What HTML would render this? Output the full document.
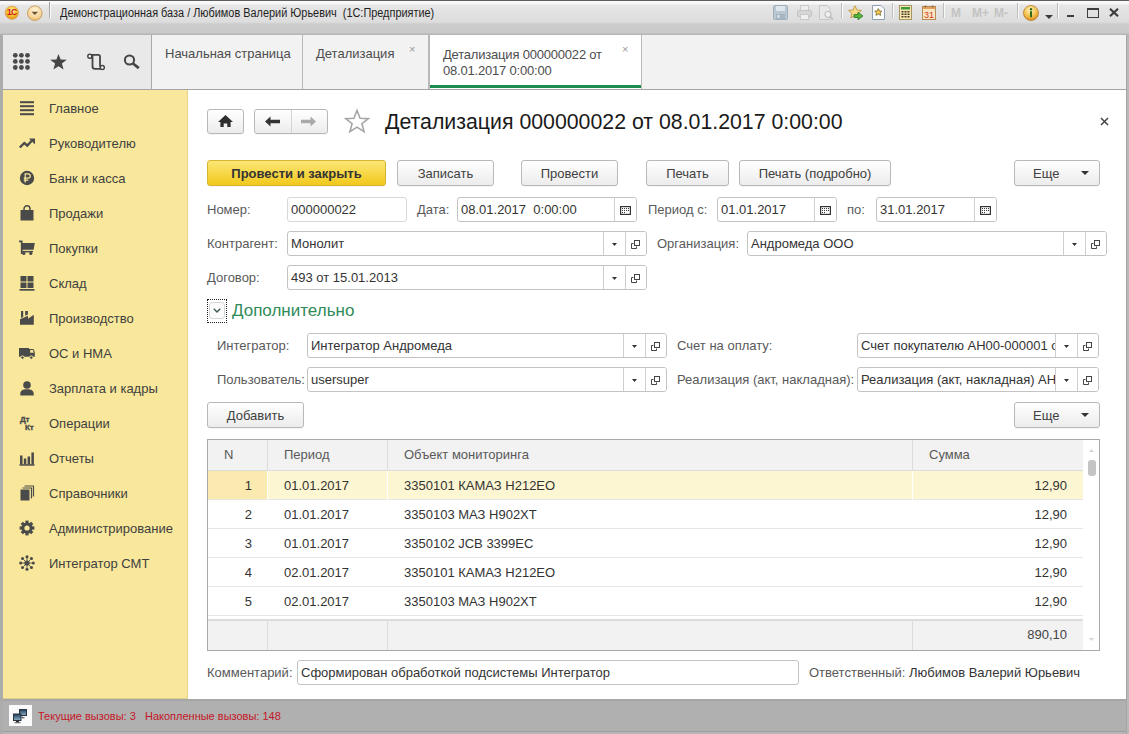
<!DOCTYPE html>
<html><head><meta charset="utf-8">
<style>
*{box-sizing:border-box;margin:0;padding:0}
html,body{width:1129px;height:734px;overflow:hidden;background:#b6b6b6}
body{font-family:"Liberation Sans",sans-serif;font-size:13px;color:#333;position:relative}
.a{position:absolute}
svg{position:absolute;overflow:visible}
#titlebar{left:0;top:0;width:1129px;height:35px;background:linear-gradient(#fafafa 0,#f6f6f6 3px,#e6e6e6 4px,#dddddd 21px,#cdcdcd 23px,#c9c9c9 32px,#b6b6b6 33px,#b6b6b6 34px);border-top:1px solid #5e5e5e}
#ttl{left:60px;top:5px;font-size:12px;line-height:16px;color:#1e1e1e;white-space:nowrap;transform:scaleX(0.909);transform-origin:0 0}
#iconpanel{left:3px;top:35px;width:149px;height:55px;background:#e9e9e9;border-right:1px solid #a9a9a9;border-bottom:1px solid #a4a4a4}
#tabs{left:152px;top:35px;width:974px;height:55px;background:#f2f2f2;border-bottom:1px solid #a4a4a4}
.tab{position:absolute;top:35px;height:54px;border-right:1px solid #b9b9b9;color:#4d4d4d;font-size:13px;line-height:16px;padding:10px 0 0 13px;white-space:nowrap}
#rstrip{left:1126px;top:35px;width:3px;height:699px;background:linear-gradient(90deg,#a6a6a6 0,#a6a6a6 1px,#b9b9b9 1px)}
#lstrip{left:0;top:35px;width:3px;height:699px;background:#acacac}
#sidebar{left:3px;top:90px;width:185px;height:609px;background:#f9e89b;border-right:1px solid #e6d58a;border-bottom:1px solid #ddd08c}
.si{position:absolute;left:49px;font-size:13px;line-height:16px;color:#404040;white-space:nowrap}
#main{left:188px;top:90px;width:938px;height:609px;background:#fff}
#status{left:3px;top:699px;width:1123px;height:33px;background:#b0b0b0;border-top:2px solid #a6a6a6;border-bottom:1px solid #9f9f9f}
.btn{position:absolute;height:26px;border:1px solid #b8b8b8;border-radius:3px;background:linear-gradient(#ffffff,#ececec);color:#404040;text-align:center;line-height:25px;font-size:13px;white-space:nowrap;box-shadow:0 1px 0 rgba(0,0,0,0.04)}
.lbl{position:absolute;color:#595959;font-size:13px;white-space:nowrap}
.inp{position:absolute;height:25px;border:1px solid #c3c3c3;border-radius:3px;background:#fff;color:#333;font-size:13px;line-height:23px;padding-left:3px;white-space:nowrap;overflow:hidden}
.dd{position:absolute;top:0;bottom:0;border-left:1px solid #dcdcdc;width:22px;background:#fff}
.t{position:absolute;color:#333;white-space:nowrap}
</style></head><body>

<div id="titlebar" class="a"></div>
<svg style="left:4px;top:5px" width="16" height="16" viewBox="0.5 0.7 16 16">
<defs><radialGradient id="g1c" cx="50%" cy="35%" r="60%"><stop offset="0" stop-color="#fff6b0"/><stop offset="0.6" stop-color="#f7c531"/><stop offset="1" stop-color="#e89a1a"/></radialGradient></defs>
<circle cx="8.4" cy="8.4" r="6.6" fill="url(#g1c)" stroke="#d89a55" stroke-width="0.8"/>
<text x="8.2" y="11.2" font-family="Liberation Sans" font-weight="bold" font-size="8.5" fill="#c8141a" text-anchor="middle" letter-spacing="-0.8">1C</text></svg>
<svg style="left:26px;top:5px" width="18" height="18" viewBox="0 0 18 18">
<defs><radialGradient id="gdd" cx="50%" cy="30%" r="70%"><stop offset="0" stop-color="#fff4d8"/><stop offset="0.7" stop-color="#f6d49a"/><stop offset="1" stop-color="#e9b865"/></radialGradient></defs>
<circle cx="8.8" cy="8.2" r="7.3" fill="url(#gdd)" stroke="#c79a5c" stroke-width="0.9"/>
<path d="M5.5 6.8 H12.1 L8.8 10 Z" fill="#6b5235"/></svg>
<div class="a" style="left:49px;top:2px;width:1px;height:16px;background:linear-gradient(#9c9c9c,#b4b4b4);box-shadow:1px 0 0 #fafafa"></div>
<div id="ttl" class="a">Демонстрационная база / Любимов Валерий Юрьевич&nbsp; (1С:Предприятие)</div>
<svg style="left:773px;top:5px" width="15" height="15" viewBox="0 0 15 15">
<rect x="0.5" y="0.5" width="14" height="14" rx="1" fill="#b9c7d2" stroke="#9fb0bd"/>
<rect x="3" y="1" width="9" height="5" fill="#dfe7ee"/><rect x="3" y="9" width="9" height="5" fill="#a5b5c2"/><rect x="4.5" y="10" width="2" height="3" fill="#dfe7ee"/></svg>
<svg style="left:797px;top:5px" width="15" height="15" viewBox="0 0 15 15">
<rect x="3.5" y="0.5" width="8" height="5" fill="#ececec" stroke="#c9c9c9"/>
<rect x="0.5" y="5.5" width="14" height="6" rx="1.5" fill="#d6d6d6" stroke="#c2c2c2"/>
<rect x="3.5" y="9.5" width="8" height="5" fill="#efefef" stroke="#c9c9c9"/></svg>
<svg style="left:819px;top:5px" width="15" height="15" viewBox="0 0 15 15">
<path d="M0.5 0.5 H8 L11 3.5 V14.5 H0.5 Z" fill="#e8e8e8" stroke="#c6c6c6"/>
<circle cx="9" cy="9.5" r="3" fill="#f1f1f1" stroke="#bcbcbc" stroke-width="1.2"/><path d="M11 11.5 L14 14.5" stroke="#c0c0c0" stroke-width="1.8"/></svg>
<div class="a" style="left:841px;top:3px;width:1px;height:15px;background:#bdbdbd;box-shadow:1px 0 0 #fafafa"></div>
<div class="a" style="left:892px;top:3px;width:1px;height:15px;background:#bdbdbd;box-shadow:1px 0 0 #fafafa"></div>
<div class="a" style="left:943px;top:3px;width:1px;height:15px;background:#bdbdbd;box-shadow:1px 0 0 #fafafa"></div>
<div class="a" style="left:1017px;top:3px;width:1px;height:15px;background:#bdbdbd;box-shadow:1px 0 0 #fafafa"></div>
<div class="a" style="left:1057px;top:3px;width:1px;height:15px;background:#bdbdbd;box-shadow:1px 0 0 #fafafa"></div>
<svg style="left:848px;top:5px" width="16" height="16" viewBox="0 0 16 16">
<path d="M7 0.8 L9 5 L13.5 5.4 L10.1 8.3 L11.2 12.8 L7 10.4 L2.8 12.8 L3.9 8.3 L0.5 5.4 L5 5 Z" fill="#f7d98a" stroke="#b89137" stroke-width="0.8"/>
<path d="M6 9.5 H10 V7.2 L15 11 L10 14.8 V12.5 H6 Z" fill="#58b43a" stroke="#2f7a20" stroke-width="0.8"/></svg>
<svg style="left:872px;top:5px" width="13" height="15" viewBox="0 0 13 15">
<path d="M0.5 0.5 H9 L12.5 4 V14.5 H0.5 Z" fill="#fdfdfd" stroke="#8ea0b4"/>
<path d="M6.3 3.5 L7.5 6 L10 6.2 L8.1 7.9 L8.7 10.4 L6.3 9 L3.9 10.4 L4.5 7.9 L2.6 6.2 L5.1 6 Z" fill="#f3c950" stroke="#6a5a2a" stroke-width="0.7"/></svg>
<svg style="left:899px;top:5px" width="13" height="15" viewBox="0 0 13 15">
<rect x="0.5" y="0.5" width="12" height="14" fill="#f6e7b6" stroke="#a89560"/>
<rect x="2" y="2" width="9" height="2.5" fill="#3f9a3a"/>
<g fill="#4a3a1a"><rect x="2.5" y="6" width="2" height="1.5"/><rect x="5.5" y="6" width="2" height="1.5"/><rect x="8.5" y="6" width="2" height="1.5"/>
<rect x="2.5" y="8.5" width="2" height="1.5"/><rect x="5.5" y="8.5" width="2" height="1.5"/><rect x="8.5" y="8.5" width="2" height="1.5"/>
<rect x="2.5" y="11" width="2" height="1.5"/><rect x="5.5" y="11" width="2" height="1.5"/><rect x="8.5" y="11" width="2" height="1.5"/></g></svg>
<svg style="left:922px;top:5px" width="14" height="15" viewBox="0 0 14 15">
<rect x="0.5" y="1.5" width="13" height="13" fill="#fbe6c4" stroke="#b58c58"/>
<rect x="1" y="2" width="12" height="2" fill="#e5a15a"/>
<circle cx="3.5" cy="1.5" r="1" fill="#8a6a3a"/><circle cx="10.5" cy="1.5" r="1" fill="#8a6a3a"/>
<text x="7" y="13" font-family="Liberation Sans" font-size="9" fill="#d43a1a" text-anchor="middle">31</text></svg>
<div class="a" style="left:951px;top:6px;font-size:12px;line-height:14px;font-weight:bold;color:#c3c3c3;white-space:nowrap">M</div>
<div class="a" style="left:972px;top:6px;font-size:12px;line-height:14px;font-weight:bold;color:#c3c3c3;white-space:nowrap">M+</div>
<div class="a" style="left:994px;top:6px;font-size:12px;line-height:14px;font-weight:bold;color:#c3c3c3;white-space:nowrap">M-</div>
<svg style="left:1023px;top:5px" width="16" height="16" viewBox="0 0 16 16">
<defs><radialGradient id="gi" cx="45%" cy="30%" r="70%"><stop offset="0" stop-color="#fff3c0"/><stop offset="0.6" stop-color="#f4c14e"/><stop offset="1" stop-color="#d98f1e"/></radialGradient></defs>
<circle cx="8" cy="8" r="7.5" fill="url(#gi)" stroke="#b67a2a" stroke-width="0.8"/>
<circle cx="8" cy="4.2" r="1.2" fill="#2f6a1a"/><rect x="7" y="6.2" width="2" height="6" fill="#2f6a1a"/></svg>
<svg style="left:1045px;top:15px" width="8" height="4" viewBox="0 0 8 4"><path d="M0 0 H8 L4 4 Z" fill="#3a3a3a"/></svg>
<div class="a" style="left:1067px;top:15px;width:7px;height:2px;background:#3c3c3c"></div>
<div class="a" style="left:1087px;top:8px;width:12px;height:10px;border:1.5px solid #3c3c3c;border-top-width:2px"></div>
<svg style="left:1109px;top:8px" width="10" height="9" viewBox="0 0 10 9"><path d="M1 0.8 L9 8.2 M9 0.8 L1 8.2" stroke="#3a3a3a" stroke-width="2.1"/></svg>
<div id="lstrip" class="a"></div>
<div id="iconpanel" class="a"></div>
<svg style="left:0;top:0" width="40" height="80" viewBox="0 0 40 80" fill="#4a4a4a"><circle cx="15.3" cy="55.3" r="2.4"/><circle cx="15.3" cy="61.4" r="2.4"/><circle cx="15.3" cy="67.5" r="2.4"/><circle cx="21.4" cy="55.3" r="2.4"/><circle cx="21.4" cy="61.4" r="2.4"/><circle cx="21.4" cy="67.5" r="2.4"/><circle cx="27.5" cy="55.3" r="2.4"/><circle cx="27.5" cy="61.4" r="2.4"/><circle cx="27.5" cy="67.5" r="2.4"/></svg>
<svg style="left:49px;top:53px" width="19" height="18" viewBox="0 0 19 18"><path d="M9.5 1 L11.6 6.6 L17.8 6.8 L12.9 10.6 L14.6 16.6 L9.5 13.2 L4.4 16.6 L6.1 10.6 L1.2 6.8 L7.4 6.6 Z" fill="#454545"/></svg>
<svg style="left:86px;top:53px" width="20" height="18" viewBox="0 0 20 18" fill="none" stroke="#454545" stroke-width="1.8">
<path d="M3.5 4.5 C3.5 2.5 5 1.8 6 1.8 H12.5 C13.5 1.8 14 2.6 14 3.6 V12 C14 13.5 15 14.2 16 14.2 M3.5 4.5 H6.5 M6.5 2.5 V13.5 C6.5 15 7.5 15.8 9 15.8 H16.2"/>
<circle cx="3.8" cy="3.3" r="2" fill="#fff" stroke-width="1.5"/><circle cx="16.3" cy="14.5" r="2" fill="#fff" stroke-width="1.5"/></svg>
<svg style="left:123px;top:54px" width="18" height="16" viewBox="0 0 18 16"><circle cx="6.5" cy="6" r="4.6" fill="none" stroke="#454545" stroke-width="2"/><path d="M10 9.5 L15.8 14.2" stroke="#454545" stroke-width="2.8"/></svg>
<div id="tabs" class="a"></div>
<div class="tab" style="left:152px;width:151px;padding-left:13px;padding-top:11px">Начальная страница</div>
<div class="tab" style="left:303px;width:126px;padding-left:13px;padding-top:11px">Детализация</div>
<div class="a" style="left:409px;top:44px;font-size:11px;line-height:10px;color:#9a9a9a">×</div>
<div class="tab" style="left:429px;width:213px;background:#fff;border-left:1px solid #b9b9b9;padding-left:13px;padding-top:12px;height:54px;letter-spacing:-0.2px">Детализация 000000022 от<br>08.01.2017 0:00:00</div>
<div class="a" style="left:622px;top:44px;font-size:11px;line-height:10px;color:#9a9a9a">×</div>
<div class="a" style="left:430px;top:85px;width:211px;height:3px;background:#1d8a4e"></div>
<div id="rstrip" class="a"></div>
<div id="sidebar" class="a"></div>
<div class="si" style="top:101px">Главное</div>
<svg style="left:19px;top:100px" width="16" height="16" viewBox="0 0 16 16"><g fill="#4a4a4a"><rect x="1" y="1.2" width="14" height="2"/><rect x="1" y="5.2" width="14" height="2"/><rect x="1" y="9.2" width="14" height="2"/><rect x="1" y="13.2" width="14" height="2"/></g></svg>
<div class="si" style="top:136px">Руководителю</div>
<svg style="left:19px;top:135px" width="16" height="16" viewBox="0 0 16 16"><path d="M0.8 12.5 L5.3 8 L8.3 10.5 L13 5.5" fill="none" stroke="#4a4a4a" stroke-width="2.4"/><path d="M10 3.5 H16 V9.5 Z" fill="#4a4a4a"/></svg>
<div class="si" style="top:171px">Банк и касса</div>
<svg style="left:19px;top:170px" width="16" height="16" viewBox="0 0 16 16"><circle cx="8" cy="8" r="7.2" fill="#4a4a4a"/><path d="M6.2 12.5 V3.8 H9 C10.6 3.8 11.3 4.7 11.3 6 C11.3 7.3 10.6 8.2 9 8.2 H4.8 M4.8 10.2 H9.3" fill="none" stroke="#fbe89b" stroke-width="1.2"/></svg>
<div class="si" style="top:206px">Продажи</div>
<svg style="left:19px;top:205px" width="16" height="16" viewBox="0 0 16 16"><path d="M1.5 5 H14.5 V15.5 H1.5 Z" fill="#4a4a4a"/><path d="M5 7 V4 C5 2 6.2 0.8 8 0.8 C9.8 0.8 11 2 11 4 V7" fill="none" stroke="#4a4a4a" stroke-width="1.5"/></svg>
<div class="si" style="top:241px">Покупки</div>
<svg style="left:19px;top:240px" width="16" height="16" viewBox="0 0 16 16"><path d="M0 1.4 H2.7 V14" fill="none" stroke="#4a4a4a" stroke-width="1.7"/><path d="M2.7 3.1 H15.8 L14.6 9.7 H2.7 Z" fill="#4a4a4a"/><rect x="3" y="10.9" width="11" height="1.5" fill="#4a4a4a"/><circle cx="4.8" cy="13.4" r="1.6" fill="#4a4a4a"/><circle cx="11.8" cy="13.4" r="1.6" fill="#4a4a4a"/></svg>
<div class="si" style="top:276px">Склад</div>
<svg style="left:19px;top:275px" width="16" height="16" viewBox="0 0 16 16"><g fill="#4a4a4a"><rect x="1.5" y="1" width="6" height="5.5"/><rect x="8.5" y="1" width="6" height="5.5"/><rect x="1.5" y="7.5" width="6" height="5.5"/><rect x="8.5" y="7.5" width="6" height="5.5"/><rect x="0.5" y="14" width="15" height="1.7"/></g></svg>
<div class="si" style="top:311px">Производство</div>
<svg style="left:19px;top:310px" width="16" height="16" viewBox="0 0 16 16"><path d="M1 14.8 V9.3 L9 5.7 V8.7 L14.8 4.8 V14.8 Z M2 1 H4.2 V6.9 L2 7.9 Z M6.2 1 H8.9 V4.6 L6.2 5.8 Z" fill="#4a4a4a"/></svg>
<div class="si" style="top:346px">ОС и НМА</div>
<svg style="left:19px;top:345px" width="16" height="16" viewBox="0 0 16 16"><path d="M0 3.1 H10.1 V11.8 H0 Z M10.1 4.1 H14.3 L15.8 7 V11.8 H10.1 Z" fill="#4a4a4a"/><path d="M11.2 5.1 H13.8 L14.9 7.8 H11.2 Z" fill="#f9e89b"/><circle cx="3.5" cy="12.6" r="1.7" fill="#4a4a4a" stroke="#f9e89b" stroke-width="1"/><circle cx="12.3" cy="12.6" r="1.7" fill="#4a4a4a" stroke="#f9e89b" stroke-width="1"/></svg>
<div class="si" style="top:381px">Зарплата и кадры</div>
<svg style="left:19px;top:380px" width="16" height="16" viewBox="0 0 16 16"><circle cx="8" cy="5" r="3.8" fill="#4a4a4a"/><path d="M1.3 15.5 V13.5 C1.3 10.8 3.8 9.3 8 9.3 C12.2 9.3 14.7 10.8 14.7 13.5 V15.5 Z" fill="#4a4a4a"/></svg>
<div class="si" style="top:416px">Операции</div>
<svg style="left:19px;top:415px" width="16" height="16" viewBox="0 0 16 16"><g font-family="Liberation Sans" font-weight="bold" font-size="8" fill="#4a4a4a" stroke="#4a4a4a" stroke-width="0.35" letter-spacing="-0.2"><text x="1" y="6.6">Дт</text><text x="6" y="14.5">Кт</text></g></svg>
<div class="si" style="top:451px">Отчеты</div>
<svg style="left:19px;top:450px" width="16" height="16" viewBox="0 0 16 16"><g fill="#4a4a4a"><rect x="1" y="5.5" width="2.5" height="9"/><rect x="4.8" y="8.5" width="2.5" height="6"/><rect x="8.6" y="6.5" width="2.5" height="8"/><rect x="12.4" y="2.5" width="2.5" height="12"/><rect x="0.5" y="14.2" width="15" height="1.5"/></g></svg>
<div class="si" style="top:486px">Справочники</div>
<svg style="left:19px;top:485px" width="16" height="16" viewBox="0 0 16 16"><rect x="1.5" y="4.5" width="9" height="11" fill="#4a4a4a"/><path d="M3.5 3 H12.5 V13.5 M5.5 1 H14.5 V11.5" fill="none" stroke="#4a4a4a" stroke-width="1.2"/></svg>
<div class="si" style="top:521px">Администрирование</div>
<svg style="left:19px;top:520px" width="16" height="16" viewBox="0 0 16 16"><g fill="#4a4a4a"><circle cx="8" cy="8" r="5.6"/><rect x="6.4" y="0.6" width="3.2" height="3.4" transform="rotate(0 8 8)"/><rect x="6.4" y="0.6" width="3.2" height="3.4" transform="rotate(45 8 8)"/><rect x="6.4" y="0.6" width="3.2" height="3.4" transform="rotate(90 8 8)"/><rect x="6.4" y="0.6" width="3.2" height="3.4" transform="rotate(135 8 8)"/><rect x="6.4" y="0.6" width="3.2" height="3.4" transform="rotate(180 8 8)"/><rect x="6.4" y="0.6" width="3.2" height="3.4" transform="rotate(225 8 8)"/><rect x="6.4" y="0.6" width="3.2" height="3.4" transform="rotate(270 8 8)"/><rect x="6.4" y="0.6" width="3.2" height="3.4" transform="rotate(315 8 8)"/></g><circle cx="8" cy="8" r="2.6" fill="#f9e89b"/></svg>
<div class="si" style="top:556px">Интегратор СМТ</div>
<svg style="left:19px;top:555px" width="16" height="16" viewBox="0 0 16 16"><g fill="#4a4a4a"><circle cx="8" cy="8" r="2.6"/><circle cx="8.00" cy="1.70" r="1.55"/><circle cx="12.45" cy="3.55" r="1.55"/><circle cx="14.30" cy="8.00" r="1.55"/><circle cx="12.45" cy="12.45" r="1.55"/><circle cx="8.00" cy="14.30" r="1.55"/><circle cx="3.55" cy="12.45" r="1.55"/><circle cx="1.70" cy="8.00" r="1.55"/><circle cx="3.55" cy="3.55" r="1.55"/></g><path d="M8 3.2 V12.8 M3.2 8 H12.8 M4.6 4.6 L11.4 11.4 M11.4 4.6 L4.6 11.4" stroke="#4a4a4a" stroke-width="0.9"/></svg>
<div id="main" class="a"></div>
<div id="status" class="a"></div>
<div class="btn" style="left:207px;top:109px;width:37px;height:25px"></div>
<svg style="left:218px;top:114px" width="15" height="14" viewBox="0 0 15 14"><path d="M7.5 1 L15 8 H12.6 V13 H9.3 V9.6 H5.7 V13 H2.4 V8 H0 Z" fill="#2e2e2e"/></svg>
<div class="btn" style="left:254px;top:109px;width:74px;height:25px"></div>
<div class="a" style="left:291px;top:110px;width:1px;height:23px;background:#d4d4d4"></div>
<svg style="left:264px;top:115px" width="18" height="13" viewBox="0 0 18 13"><path d="M1 6.5 L6.5 1.5 V4.8 H16 V8.2 H6.5 V11.5 Z" fill="#333"/></svg>
<svg style="left:299px;top:115px" width="18" height="13" viewBox="0 0 18 13"><path d="M17 6.5 L11.5 1.5 V4.8 H2 V8.2 H11.5 V11.5 Z" fill="#a9a9a9"/></svg>
<svg style="left:344px;top:109px" width="26" height="25" viewBox="0 0 26 25"><path d="M13 1.5 L16.1 9.2 L24.3 9.6 L17.9 14.7 L20.1 22.6 L13 18.1 L5.9 22.6 L8.1 14.7 L1.7 9.6 L9.9 9.2 Z" fill="none" stroke="#a6a6a6" stroke-width="1.6"/></svg>
<div class="t" style="left:385px;top:110px;font-size:21.3px;line-height:25px;color:#1a1a1a">Детализация 000000022 от 08.01.2017 0:00:00</div>
<svg style="left:1100px;top:117px" width="9" height="9" viewBox="0 0 9 9"><path d="M1 1 L8 8 M8 1 L1 8" stroke="#444" stroke-width="1.5"/></svg>
<div class="btn" style="left:207px;top:160px;width:179px;height:26px;background:linear-gradient(#fce776,#f2c81c);border-color:#d9b431;color:#333;font-weight:bold">Провести и закрыть</div>
<div class="btn" style="left:397px;top:160px;width:97px;height:26px">Записать</div>
<div class="btn" style="left:521px;top:160px;width:97px;height:26px">Провести</div>
<div class="btn" style="left:646px;top:160px;width:83px;height:26px">Печать</div>
<div class="btn" style="left:739px;top:160px;width:152px;height:26px">Печать (подробно)</div>
<div class="btn" style="left:1014px;top:160px;width:86px;height:26px;text-align:left;padding-left:18px">Еще</div>
<svg style="left:1081px;top:171px" width="8" height="4" viewBox="0 0 8 4"><path d="M0 0 H8 L4 4 Z" fill="#333"/></svg>
<div class="lbl" style="left:207px;top:197px;line-height:25px;color:#595959">Номер:</div>
<div class="inp" style="left:287px;top:197px;width:120px;height:25px;border-color:#d9d9d9">000000022</div>
<div class="lbl" style="left:417px;top:197px;line-height:25px;color:#595959">Дата:</div>
<div class="inp" style="left:457px;top:197px;width:180px;height:25px;">08.01.2017&nbsp; 0:00:00</div>
<div class="a" style="left:614px;top:198px;width:22px;height:23px;background:#fff;border-left:1px solid #cfcfcf;border-radius:0 2px 2px 0"></div>
<svg style="left:620px;top:206px" width="11" height="9" viewBox="0 0 11 9"><rect x="0.6" y="0.6" width="9.8" height="7.8" fill="#fff" stroke="#333" stroke-width="1.2"/><g fill="#333"><rect x="2" y="2" width="1" height="1"/><rect x="4" y="2" width="1" height="1"/><rect x="6" y="2" width="1" height="1"/><rect x="8" y="2" width="1" height="1"/><rect x="2" y="4" width="1" height="1"/><rect x="4" y="4" width="1" height="1"/><rect x="6" y="4" width="1" height="1"/><rect x="8" y="4" width="1" height="1"/><rect x="2" y="6" width="1" height="1"/><rect x="4" y="6" width="1" height="1"/></g></svg>
<div class="lbl" style="left:648px;top:197px;line-height:25px;color:#595959">Период с:</div>
<div class="inp" style="left:717px;top:197px;width:120px;height:25px;">01.01.2017</div>
<div class="a" style="left:814px;top:198px;width:22px;height:23px;background:#fff;border-left:1px solid #cfcfcf;border-radius:0 2px 2px 0"></div>
<svg style="left:820px;top:206px" width="11" height="9" viewBox="0 0 11 9"><rect x="0.6" y="0.6" width="9.8" height="7.8" fill="#fff" stroke="#333" stroke-width="1.2"/><g fill="#333"><rect x="2" y="2" width="1" height="1"/><rect x="4" y="2" width="1" height="1"/><rect x="6" y="2" width="1" height="1"/><rect x="8" y="2" width="1" height="1"/><rect x="2" y="4" width="1" height="1"/><rect x="4" y="4" width="1" height="1"/><rect x="6" y="4" width="1" height="1"/><rect x="8" y="4" width="1" height="1"/><rect x="2" y="6" width="1" height="1"/><rect x="4" y="6" width="1" height="1"/></g></svg>
<div class="lbl" style="left:847px;top:197px;line-height:25px;color:#595959">по:</div>
<div class="inp" style="left:876px;top:197px;width:121px;height:25px;">31.01.2017</div>
<div class="a" style="left:974px;top:198px;width:22px;height:23px;background:#fff;border-left:1px solid #cfcfcf;border-radius:0 2px 2px 0"></div>
<svg style="left:980px;top:206px" width="11" height="9" viewBox="0 0 11 9"><rect x="0.6" y="0.6" width="9.8" height="7.8" fill="#fff" stroke="#333" stroke-width="1.2"/><g fill="#333"><rect x="2" y="2" width="1" height="1"/><rect x="4" y="2" width="1" height="1"/><rect x="6" y="2" width="1" height="1"/><rect x="8" y="2" width="1" height="1"/><rect x="2" y="4" width="1" height="1"/><rect x="4" y="4" width="1" height="1"/><rect x="6" y="4" width="1" height="1"/><rect x="8" y="4" width="1" height="1"/><rect x="2" y="6" width="1" height="1"/><rect x="4" y="6" width="1" height="1"/></g></svg>
<div class="lbl" style="left:207px;top:231px;line-height:25px;color:#595959">Контрагент:</div>
<div class="inp" style="left:287px;top:231px;width:360px;height:25px;">Монолит</div>
<div class="a" style="left:603px;top:232px;width:43px;height:23px;background:#fff;border-left:1px solid #cfcfcf;border-radius:0 2px 2px 0"></div>
<div class="a" style="left:625px;top:232px;width:1px;height:23px;background:#cfcfcf"></div>
<svg style="left:612px;top:243px" width="5" height="3" viewBox="0 0 5 3"><path d="M0 0 H5 L2.5 3 Z" fill="#333"/></svg>
<svg style="left:630px;top:239px" width="11" height="11" viewBox="0 0 11 11" fill="none" stroke="#444" stroke-width="1"><rect x="4.5" y="1.5" width="5" height="5"/><path d="M3.5 4.5 H1.5 V9.5 H6.5 V7.5"/></svg>
<div class="lbl" style="left:657px;top:231px;line-height:25px;color:#595959">Организация:</div>
<div class="inp" style="left:747px;top:231px;width:360px;height:25px;">Андромеда ООО</div>
<div class="a" style="left:1063px;top:232px;width:43px;height:23px;background:#fff;border-left:1px solid #cfcfcf;border-radius:0 2px 2px 0"></div>
<div class="a" style="left:1085px;top:232px;width:1px;height:23px;background:#cfcfcf"></div>
<svg style="left:1072px;top:243px" width="5" height="3" viewBox="0 0 5 3"><path d="M0 0 H5 L2.5 3 Z" fill="#333"/></svg>
<svg style="left:1090px;top:239px" width="11" height="11" viewBox="0 0 11 11" fill="none" stroke="#444" stroke-width="1"><rect x="4.5" y="1.5" width="5" height="5"/><path d="M3.5 4.5 H1.5 V9.5 H6.5 V7.5"/></svg>
<div class="lbl" style="left:207px;top:265px;line-height:25px;color:#595959">Договор:</div>
<div class="inp" style="left:287px;top:265px;width:360px;height:25px;">493 от 15.01.2013</div>
<div class="a" style="left:603px;top:266px;width:43px;height:23px;background:#fff;border-left:1px solid #cfcfcf;border-radius:0 2px 2px 0"></div>
<div class="a" style="left:625px;top:266px;width:1px;height:23px;background:#cfcfcf"></div>
<svg style="left:612px;top:277px" width="5" height="3" viewBox="0 0 5 3"><path d="M0 0 H5 L2.5 3 Z" fill="#333"/></svg>
<svg style="left:630px;top:273px" width="11" height="11" viewBox="0 0 11 11" fill="none" stroke="#444" stroke-width="1"><rect x="4.5" y="1.5" width="5" height="5"/><path d="M3.5 4.5 H1.5 V9.5 H6.5 V7.5"/></svg>
<div class="a" style="left:207px;top:299px;width:20px;height:24px;border:1px dotted #222"></div>
<div class="a" style="left:209px;top:302px;width:16px;height:17px;border:1px solid #d6d6d6;border-radius:3px;background:#fcfcfc"></div>
<svg style="left:213px;top:308px" width="8" height="5" viewBox="0 0 8 5"><path d="M0.8 0.8 L4 4 L7.2 0.8" fill="none" stroke="#3d5a50" stroke-width="1.4"/></svg>
<div class="t" style="left:232px;top:299px;font-size:17px;line-height:23px;color:#2f8b58">Дополнительно</div>
<div class="lbl" style="left:217px;top:333px;line-height:25px;color:#595959">Интегратор:</div>
<div class="inp" style="left:307px;top:333px;width:360px;height:25px;">Интегратор Андромеда</div>
<div class="a" style="left:623px;top:334px;width:43px;height:23px;background:#fff;border-left:1px solid #cfcfcf;border-radius:0 2px 2px 0"></div>
<div class="a" style="left:645px;top:334px;width:1px;height:23px;background:#cfcfcf"></div>
<svg style="left:632px;top:345px" width="5" height="3" viewBox="0 0 5 3"><path d="M0 0 H5 L2.5 3 Z" fill="#333"/></svg>
<svg style="left:650px;top:341px" width="11" height="11" viewBox="0 0 11 11" fill="none" stroke="#444" stroke-width="1"><rect x="4.5" y="1.5" width="5" height="5"/><path d="M3.5 4.5 H1.5 V9.5 H6.5 V7.5"/></svg>
<div class="lbl" style="left:677px;top:333px;line-height:25px;color:#595959">Счет на оплату:</div>
<div class="inp" style="left:857px;top:333px;width:242px;height:25px;">Счет покупателю АН00-000001 от 01.01.2017</div>
<div class="a" style="left:1055px;top:334px;width:43px;height:23px;background:#fff;border-left:1px solid #cfcfcf;border-radius:0 2px 2px 0"></div>
<div class="a" style="left:1077px;top:334px;width:1px;height:23px;background:#cfcfcf"></div>
<svg style="left:1064px;top:345px" width="5" height="3" viewBox="0 0 5 3"><path d="M0 0 H5 L2.5 3 Z" fill="#333"/></svg>
<svg style="left:1082px;top:341px" width="11" height="11" viewBox="0 0 11 11" fill="none" stroke="#444" stroke-width="1"><rect x="4.5" y="1.5" width="5" height="5"/><path d="M3.5 4.5 H1.5 V9.5 H6.5 V7.5"/></svg>
<div class="lbl" style="left:217px;top:367px;line-height:25px;color:#595959">Пользователь:</div>
<div class="inp" style="left:307px;top:367px;width:360px;height:25px;">usersuper</div>
<div class="a" style="left:623px;top:368px;width:43px;height:23px;background:#fff;border-left:1px solid #cfcfcf;border-radius:0 2px 2px 0"></div>
<div class="a" style="left:645px;top:368px;width:1px;height:23px;background:#cfcfcf"></div>
<svg style="left:632px;top:379px" width="5" height="3" viewBox="0 0 5 3"><path d="M0 0 H5 L2.5 3 Z" fill="#333"/></svg>
<svg style="left:650px;top:375px" width="11" height="11" viewBox="0 0 11 11" fill="none" stroke="#444" stroke-width="1"><rect x="4.5" y="1.5" width="5" height="5"/><path d="M3.5 4.5 H1.5 V9.5 H6.5 V7.5"/></svg>
<div class="lbl" style="left:677px;top:367px;line-height:25px;color:#595959">Реализация (акт, накладная):</div>
<div class="inp" style="left:857px;top:367px;width:242px;height:25px;">Реализация (акт, накладная) АН00-000001</div>
<div class="a" style="left:1055px;top:368px;width:43px;height:23px;background:#fff;border-left:1px solid #cfcfcf;border-radius:0 2px 2px 0"></div>
<div class="a" style="left:1077px;top:368px;width:1px;height:23px;background:#cfcfcf"></div>
<svg style="left:1064px;top:379px" width="5" height="3" viewBox="0 0 5 3"><path d="M0 0 H5 L2.5 3 Z" fill="#333"/></svg>
<svg style="left:1082px;top:375px" width="11" height="11" viewBox="0 0 11 11" fill="none" stroke="#444" stroke-width="1"><rect x="4.5" y="1.5" width="5" height="5"/><path d="M3.5 4.5 H1.5 V9.5 H6.5 V7.5"/></svg>
<div class="btn" style="left:207px;top:402px;width:97px;height:26px">Добавить</div>
<div class="btn" style="left:1014px;top:402px;width:86px;height:26px;text-align:left;padding-left:18px">Еще</div>
<svg style="left:1081px;top:413px" width="8" height="4" viewBox="0 0 8 4"><path d="M0 0 H8 L4 4 Z" fill="#333"/></svg>
<div class="a" style="left:207px;top:439px;width:893px;height:212px;border:1px solid #a9a9a9;background:#fff"></div>
<div class="a" style="left:208px;top:440px;width:875px;height:31px;background:#f2f2f2;border-bottom:1px solid #dcdcdc"></div>
<div class="a" style="left:208px;top:471px;width:875px;height:29px;background:#fdf6d2"></div>
<div class="a" style="left:208px;top:471px;width:59px;height:29px;background:#faeab0"></div>
<div class="a" style="left:208px;top:619px;width:875px;height:31px;background:#f2f2f2;border-top:2px solid #dcdcdc"></div>
<div class="lbl" style="left:224px;top:439px;line-height:31px;color:#595959">N</div>
<div class="lbl" style="left:284px;top:439px;line-height:31px;color:#595959">Период</div>
<div class="lbl" style="left:404px;top:439px;line-height:31px;color:#595959">Объект мониторинга</div>
<div class="lbl" style="left:929px;top:439px;line-height:31px;color:#595959">Сумма</div>
<div class="a" style="left:208px;top:499px;width:875px;height:1px;background:#e6e6e6"></div>
<div class="t" style="left:208px;top:471px;width:44px;text-align:right;line-height:29px">1</div>
<div class="t" style="left:284px;top:471px;line-height:29px">01.01.2017</div>
<div class="t" style="left:404px;top:471px;line-height:29px">3350101 КАМАЗ Н212ЕО</div>
<div class="t" style="left:1000px;top:471px;width:67px;text-align:right;line-height:29px">12,90</div>
<div class="a" style="left:208px;top:528px;width:875px;height:1px;background:#e6e6e6"></div>
<div class="t" style="left:208px;top:500px;width:44px;text-align:right;line-height:29px">2</div>
<div class="t" style="left:284px;top:500px;line-height:29px">01.01.2017</div>
<div class="t" style="left:404px;top:500px;line-height:29px">3350103 МАЗ Н902ХТ</div>
<div class="t" style="left:1000px;top:500px;width:67px;text-align:right;line-height:29px">12,90</div>
<div class="a" style="left:208px;top:557px;width:875px;height:1px;background:#e6e6e6"></div>
<div class="t" style="left:208px;top:529px;width:44px;text-align:right;line-height:29px">3</div>
<div class="t" style="left:284px;top:529px;line-height:29px">01.01.2017</div>
<div class="t" style="left:404px;top:529px;line-height:29px">3350102 JCB 3399ЕС</div>
<div class="t" style="left:1000px;top:529px;width:67px;text-align:right;line-height:29px">12,90</div>
<div class="a" style="left:208px;top:586px;width:875px;height:1px;background:#e6e6e6"></div>
<div class="t" style="left:208px;top:558px;width:44px;text-align:right;line-height:29px">4</div>
<div class="t" style="left:284px;top:558px;line-height:29px">02.01.2017</div>
<div class="t" style="left:404px;top:558px;line-height:29px">3350101 КАМАЗ Н212ЕО</div>
<div class="t" style="left:1000px;top:558px;width:67px;text-align:right;line-height:29px">12,90</div>
<div class="a" style="left:208px;top:615px;width:875px;height:1px;background:#e6e6e6"></div>
<div class="t" style="left:208px;top:587px;width:44px;text-align:right;line-height:29px">5</div>
<div class="t" style="left:284px;top:587px;line-height:29px">02.01.2017</div>
<div class="t" style="left:404px;top:587px;line-height:29px">3350103 МАЗ Н902ХТ</div>
<div class="t" style="left:1000px;top:587px;width:67px;text-align:right;line-height:29px">12,90</div>
<div class="a" style="left:267px;top:440px;width:1px;height:31px;background:#dcdcdc"></div>
<div class="a" style="left:267px;top:471px;width:1px;height:29px;background:#fff"></div>
<div class="a" style="left:267px;top:620px;width:1px;height:30px;background:#dcdcdc"></div>
<div class="a" style="left:387px;top:440px;width:1px;height:31px;background:#dcdcdc"></div>
<div class="a" style="left:387px;top:471px;width:1px;height:29px;background:#fff"></div>
<div class="a" style="left:387px;top:620px;width:1px;height:30px;background:#dcdcdc"></div>
<div class="a" style="left:912px;top:440px;width:1px;height:31px;background:#dcdcdc"></div>
<div class="a" style="left:912px;top:471px;width:1px;height:29px;background:#fff"></div>
<div class="a" style="left:912px;top:620px;width:1px;height:30px;background:#dcdcdc"></div>
<div class="t" style="left:1000px;top:620px;width:67px;text-align:right;line-height:30px;color:#444">890,10</div>
<svg style="left:1089px;top:449px" width="5" height="3" viewBox="0 0 5 3"><path d="M0 3 L2.5 0 L5 3 Z" fill="#d4d4d4"/></svg>
<div class="a" style="left:1088px;top:460px;width:8px;height:16px;border-radius:3px;background:#c4c4c4"></div>
<svg style="left:1089px;top:638px" width="5" height="3" viewBox="0 0 5 3"><path d="M0 0 H5 L2.5 3 Z" fill="#d4d4d4"/></svg>
<div class="lbl" style="left:207px;top:660px;line-height:25px;color:#595959">Комментарий:</div>
<div class="inp" style="left:297px;top:660px;width:502px;height:25px;">Сформирован обработкой подсистемы Интегратор</div>
<div class="lbl" style="left:809px;top:660px;line-height:25px;color:#595959">Ответственный:</div>
<div class="t" style="left:909px;top:660px;line-height:25px">Любимов Валерий Юрьевич</div>
<div class="a" style="left:9px;top:705px;width:23px;height:21px;background:#fafafa"></div>
<svg style="left:12px;top:708px" width="17" height="16" viewBox="0 0 17 16">
<defs><linearGradient id="scr" x1="0" y1="0" x2="0" y2="1"><stop offset="0" stop-color="#1f3a55"/><stop offset="1" stop-color="#8fb0c8"/></linearGradient></defs>
<rect x="7.5" y="1.5" width="7" height="6" fill="url(#scr)" stroke="#2a3440" stroke-width="1"/><rect x="1.5" y="6" width="7.5" height="6.5" fill="url(#scr)" stroke="#2a3440" stroke-width="1"/>
<rect x="4" y="13" width="3" height="1.2" fill="#333"/><rect x="2.5" y="14.2" width="6" height="1" fill="#555"/><path d="M10 8.5 V9.8 H12.5" stroke="#444" fill="none"/></svg>
<div class="t" style="left:38px;top:707px;font-size:11px;line-height:18px;color:#c41628">Текущие вызовы: 3&nbsp;&nbsp; Накопленные вызовы: 148</div>
</body></html>
